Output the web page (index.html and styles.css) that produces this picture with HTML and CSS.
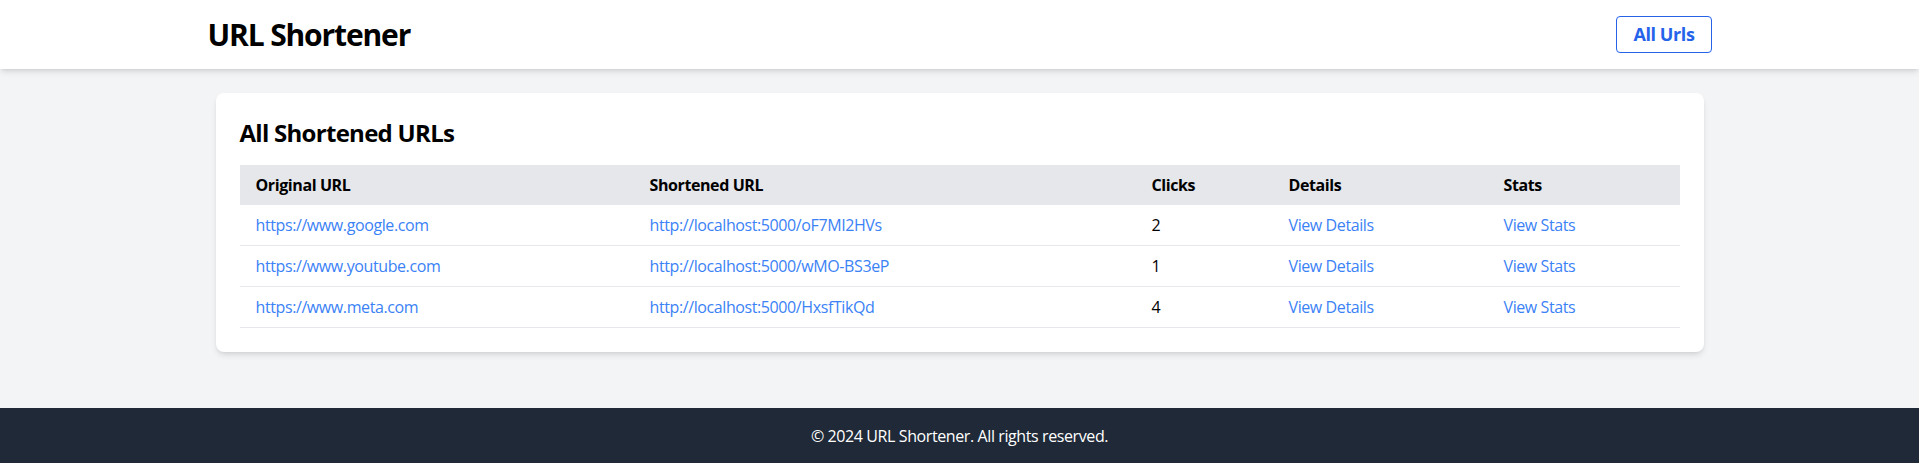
FILE: index.html
```html
<!DOCTYPE html>
<html lang="en">
<head>
<meta charset="utf-8">
<title>URL Shortener</title>
<link rel="stylesheet" href="styles.css">
</head>
<body>
<div class="page">
  <header class="site-header">
    <div class="header-inner">
      <h1 class="brand">URL Shortener</h1>
      <a class="nav-btn" href="#">All Urls</a>
    </div>
  </header>
  <main class="main">
    <section class="card">
      <h2 class="card-title">All Shortened URLs</h2>
      <table class="url-table">
        <colgroup>
          <col class="c1"><col class="c2"><col class="c3"><col class="c4"><col class="c5">
        </colgroup>
        <thead>
          <tr><th>Original URL</th><th>Shortened URL</th><th>Clicks</th><th>Details</th><th>Stats</th></tr>
        </thead>
        <tbody>
          <tr>
            <td><a href="#">https://www.google.com</a></td>
            <td><a href="#">http://localhost:5000/oF7MI2HVs</a></td>
            <td>2</td>
            <td><a href="#">View Details</a></td>
            <td><a href="#">View Stats</a></td>
          </tr>
          <tr>
            <td><a href="#">https://www.youtube.com</a></td>
            <td><a href="#">http://localhost:5000/wMO-BS3eP</a></td>
            <td>1</td>
            <td><a href="#">View Details</a></td>
            <td><a href="#">View Stats</a></td>
          </tr>
          <tr>
            <td><a href="#">https://www.meta.com</a></td>
            <td><a href="#">http://localhost:5000/HxsfTikQd</a></td>
            <td>4</td>
            <td><a href="#">View Details</a></td>
            <td><a href="#">View Stats</a></td>
          </tr>
        </tbody>
      </table>
    </section>
  </main>
  <footer class="site-footer">© 2024 URL Shortener. All rights reserved.</footer>
</div>
</body>
</html>
```

FILE: styles.css
```css
* { box-sizing: border-box; }
html, body { margin: 0; padding: 0; }
body {
  font-family: "Segoe UI", "Open Sans", "Noto Sans", sans-serif;
  font-size: 16px;
  line-height: 24px;
  letter-spacing: -0.025em;
  color: #000;
  background: #f3f4f6;
}
.page {
  min-height: 100vh;
  display: flex;
  flex-direction: column;
}
.site-header {
  background: #fff;
  box-shadow: 0 4px 6px -1px rgba(0,0,0,0.1), 0 2px 4px -2px rgba(0,0,0,0.1);
  position: relative;
  z-index: 1;
}
.header-inner {
  max-width: 1536px;
  margin: 0 auto;
  padding: 16px 16px;
  display: flex;
  align-items: center;
  justify-content: space-between;
}
.brand {
  margin: 0;
  font-size: 30px;
  line-height: 36px;
  font-weight: 700;
  letter-spacing: -0.038em;
  color: #000;
}
.nav-btn {
  display: inline-block;
  border: 1px solid #2563eb;
  border-radius: 4px;
  padding: 4px 16px;
  font-size: 18px;
  line-height: 27px;
  font-weight: 700;
  color: #2563eb;
  text-decoration: none;
}
.main {
  flex: 1;
  width: 100%;
  max-width: 1536px;
  margin: 0 auto;
  padding: 24px 24px;
}
.card {
  background: #fff;
  border-radius: 8px;
  padding: 24px;
  box-shadow: 0 4px 6px -1px rgba(0,0,0,0.1), 0 2px 4px -2px rgba(0,0,0,0.1);
}
.card-title {
  margin: 0 0 16px;
  font-size: 24px;
  line-height: 32px;
  font-weight: 700;
  letter-spacing: -0.03em;
}
.url-table {
  width: 100%;
  border-collapse: collapse;
  table-layout: fixed;
}
.c1 { width: 394px; }
.c2 { width: 502px; }
.c3 { width: 137px; }
.c4 { width: 215px; }
.c5 { width: auto; }
.url-table thead tr { background: #e5e7eb; }
.url-table th {
  text-align: left;
  font-weight: 700;
  padding: 8px 16px;
}
.url-table td {
  padding: 8px 16px;
  border-bottom: 1px solid #e5e7eb;
}
.url-table a {
  color: #3b82f6;
  text-decoration: none;
}
.site-footer {
  background: #1f2937;
  color: #fff;
  text-align: center;
  padding: 16px 0 15px;
}
```
